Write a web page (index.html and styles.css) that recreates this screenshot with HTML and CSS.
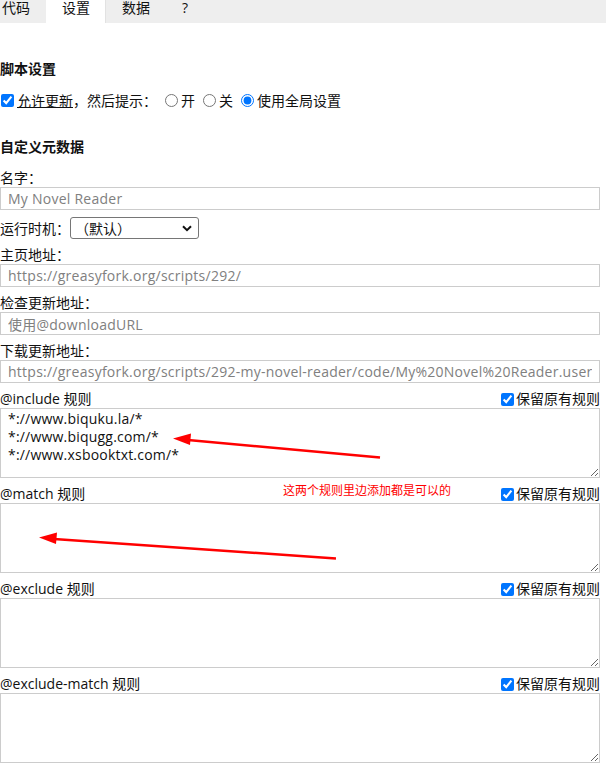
FILE: index.html
```html
<!DOCTYPE html>
<html lang="zh-CN">
<head>
<meta charset="utf-8">
<title>设置</title>
<link rel="stylesheet" href="styles.css">
</head>
<body>
<div class="page">
  <nav class="tabs">
    <span class="tab tab-first">代码</span>
    <span class="tab tab-active">设置</span>
    <span class="tab">数据</span>
    <span class="tab">?</span>
  </nav>

  <main class="content">
    <h3 class="section-title section-first">脚本设置</h3>
    <div class="update-row">
      <input type="checkbox" class="cb" checked>
      <span class="link">允许更新</span><span>，然后提示：</span>
      <label class="radio"><input type="radio" name="notify">开</label>
      <label class="radio"><input type="radio" name="notify">关</label>
      <label class="radio"><input type="radio" name="notify" checked>使用全局设置</label>
    </div>

    <h3 class="section-title">自定义元数据</h3>
    <div class="field-label field-first">名字：</div>
    <input class="text-input" type="text" value="My Novel Reader">

    <div class="run-at">
      <span>运行时机：</span>
      <span class="select-wrap">
        <select class="select"><option>（默认）</option></select>
        <svg class="chevron" width="10" height="7" viewBox="0 0 10 7"><path d="M1 1.2 L5 5.2 L9 1.2" fill="none" stroke="#111" stroke-width="2"/></svg>
      </span>
    </div>

    <div class="field-label">主页地址：</div>
    <input class="text-input" type="text" value="https://greasyfork.org/scripts/292/">

    <div class="field-label">检查更新地址：</div>
    <input class="text-input" type="text" value="使用@downloadURL">

    <div class="field-label">下载更新地址：</div>
    <input class="text-input" type="text" value="https://greasyfork.org/scripts/292-my-novel-reader/code/My%20Novel%20Reader.user.js">

    <div class="rule-head">
      <span>@include 规则</span>
      <label class="keep"><input type="checkbox" checked>保留原有规则</label>
    </div>
    <textarea class="rules">*://www.biquku.la/*
*://www.biqugg.com/*
*://www.xsbooktxt.com/*</textarea>

    <div class="rule-head rule-gap">
      <span>@match 规则</span>
      <label class="keep"><input type="checkbox" checked>保留原有规则</label>
    </div>
    <textarea class="rules"></textarea>

    <div class="rule-head rule-gap">
      <span>@exclude 规则</span>
      <label class="keep"><input type="checkbox" checked>保留原有规则</label>
    </div>
    <textarea class="rules"></textarea>

    <div class="rule-head rule-gap">
      <span>@exclude-match 规则</span>
      <label class="keep"><input type="checkbox" checked>保留原有规则</label>
    </div>
    <textarea class="rules"></textarea>
  </main>

  <svg class="annot" width="606" height="774" viewBox="0 0 606 774">
    <line x1="380" y1="457.5" x2="188" y2="440" stroke="#ff0000" stroke-width="2.5"/>
    <polygon points="173,438.5 191,433.5 190,445" fill="#ff0000"/>
    <line x1="336" y1="558.5" x2="54" y2="539" stroke="#ff0000" stroke-width="2.5"/>
    <polygon points="39,537.5 57,532.5 56,544" fill="#ff0000"/>
  </svg>
  <div class="note">这两个规则里边添加都是可以的</div>
</div>
</body>
</html>
```

FILE: styles.css
```css
* {
  box-sizing: border-box;
}

html, body {
  margin: 0;
  padding: 0;
  background: #ffffff;
}

body {
  font-family: "Open Sans", "Noto Sans CJK SC", sans-serif;
  font-size: 14px;
  color: #111111;
}

.page {
  position: relative;
  width: 606px;
  height: 774px;
  overflow: hidden;
}

.tabs {
  display: flex;
  height: 23px;
  background: #eeeeee;
}

.tab {
  padding: 0 16px;
  height: 23px;
  line-height: 16px;
  font-size: 14px;
}

.tab-first {
  padding-left: 2px;
}

.tab-active {
  background: #ffffff;
  border-right: 1px solid #e2e2e2;
  padding-right: 15px;
}

.content {
  width: 600px;
}

.section-title {
  margin: 27px 0 0;
  font-size: 14px;
  font-weight: bold;
  line-height: 20px;
}

.section-first {
  margin-top: 36px;
}

.update-row {
  display: flex;
  align-items: center;
  height: 20px;
  margin-top: 11px;
}

.cb {
  width: 13px;
  height: 13px;
  margin: 0 3px 0 1px;
}

.link {
  text-decoration: underline;
}

.radio {
  display: flex;
  align-items: center;
}

.radio input {
  width: 13px;
  height: 13px;
  margin: 0 3px 0 8px;
}

.field-label {
  line-height: 18px;
  height: 18px;
}

.field-first {
  margin-top: 12px;
}

.text-input {
  display: block;
  width: 600px;
  height: 23px;
  margin: 0 0 7px;
  padding: 0 7px;
  border: 1px solid #cccccc;
  border-radius: 0;
  font-family: "Open Sans", "Noto Sans CJK SC", sans-serif;
  font-size: 14px;
  letter-spacing: 0.25px;
  color: #808080;
  background: #ffffff;
  outline: none;
}

.run-at {
  display: flex;
  align-items: center;
  height: 22px;
  margin-bottom: 7px;
}

.select-wrap {
  position: relative;
  display: block;
  width: 129px;
  height: 22px;
}

.select {
  appearance: none;
  -webkit-appearance: none;
  width: 129px;
  height: 22px;
  padding: 0 0 0 4px;
  border: 1px solid #767676;
  border-radius: 3px;
  background: #ffffff;
  font-family: "Open Sans", "Noto Sans CJK SC", sans-serif;
  font-size: 14px;
  color: #111111;
}

.chevron {
  position: absolute;
  right: 7px;
  top: 8px;
}

.rule-head {
  display: flex;
  justify-content: space-between;
  align-items: center;
  height: 18px;
  line-height: 18px;
}

.rule-gap {
  margin-top: 7px;
}

.keep {
  display: flex;
  align-items: center;
}

.keep input {
  width: 13px;
  height: 13px;
  margin: 0 2px 0 0;
}

.rules {
  display: block;
  width: 600px;
  height: 70px;
  margin: 0;
  padding: 1px 7px;
  border: 1px solid #cccccc;
  border-radius: 0;
  font-family: "Open Sans", "Noto Sans CJK SC", sans-serif;
  font-size: 14px;
  letter-spacing: 0.2px;
  line-height: 18px;
  color: #111111;
  background: #ffffff;
  overflow: hidden;
  outline: none;
}

.annot {
  position: absolute;
  left: 0;
  top: 0;
  pointer-events: none;
}

.note {
  position: absolute;
  left: 283px;
  top: 483px;
  font-size: 12px;
  line-height: 16px;
  color: #ff0000;
  white-space: nowrap;
}
```
